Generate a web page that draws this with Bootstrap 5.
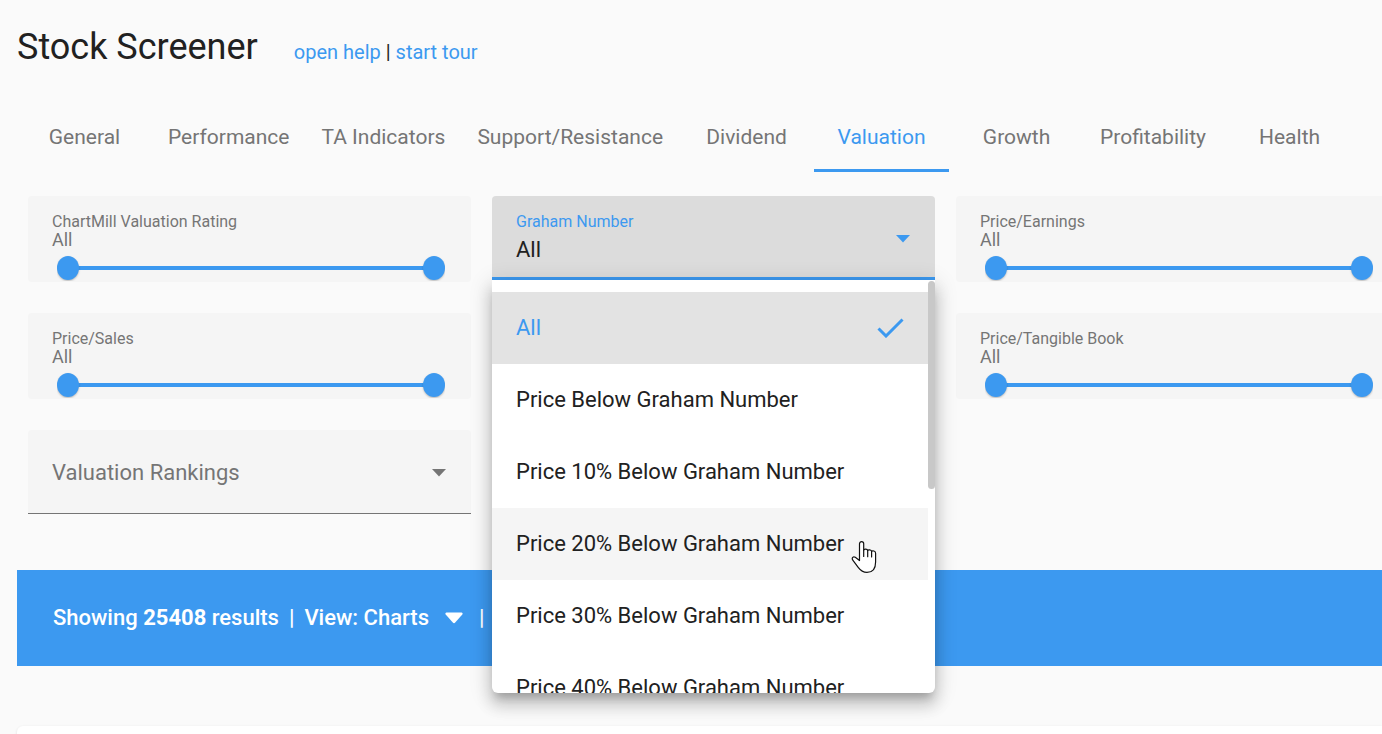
<!DOCTYPE html>
<html lang="en">
<head>
<meta charset="utf-8">
<meta name="viewport" content="width=device-width, initial-scale=1">
<title>Stock Screener</title>
<link rel="stylesheet" href="https://cdn.jsdelivr.net/npm/bootstrap@5.3.0/dist/css/bootstrap.min.css">
<style>
  :root { --accent: #3c99f0; --muted: #757575; --ink: #212121; }
  body { background: #fafafa; color: var(--ink); font-family: Roboto, sans-serif; font-size: 21px; line-height: 24px; }
  .page { overflow: hidden; min-height: 100vh; padding-left: 17px; }
  .page-title { font-size: 36px; line-height: 48px; font-weight: 400; }
  .help-links { font-size: 20px; }
  .help-links a { color: var(--accent); text-decoration: none; }
  .page-head { padding: 23px 0 29px; gap: 36px; }

  .screener-tabs .nav-link { min-width: 135px; height: 72px; padding: 4px 16px 0; color: var(--muted); background: none; border: 0; border-bottom: 3px solid transparent; border-radius: 0; text-align: center; }
  .screener-tabs .nav-link.active { color: var(--accent); border-color: var(--accent); }

  .filters { display: grid; grid-template-columns: repeat(3, 1fr); gap: 31px 21px; margin: 24px -17px 0 11px; }
  .filter-box { background: #f5f5f5; height: 86px; padding: 16px 24px 0; color: var(--muted); border-radius: 4px; }
  .col-last { grid-column: 3; }
  .filter-name { display: block; font-size: 16px; line-height: 20px; }
  .filter-value { display: block; font-size: 18px; line-height: 16px; }

  .dual-range { display: grid; overflow: hidden; height: 33px; margin: 0 2px 0 5px; }
  .dual-range input { grid-area: 1 / 1; appearance: none; width: 100%; height: 24px; margin: 8px 0 0; background: none; pointer-events: none; }
  .dual-range .track { grid-area: 1 / 1; height: 4px; margin: 18px 11px 0; background: var(--accent); }
  .dual-range input::-webkit-slider-thumb { appearance: none; width: 22px; height: 24px; border: 0; border-radius: 50%; background: var(--accent); box-shadow: 0 1px 2px rgba(0,0,0,.25); pointer-events: auto; }

  .select-box { height: 84px; background: #f5f5f5; border-bottom: 1px solid #757575; border-radius: 4px 4px 0 0; color: var(--muted); }
  .select-box select { appearance: none; width: 100%; height: 100%; padding: 2px 24px 0; border: 0; background: none; color: inherit; outline: 0; font-size: 22px; }
  .select-box.open { background: #dcdcdc; border-bottom: 3px solid var(--accent); }
  .select-box.open label { left: 24px; top: 16px; font-size: 16px; line-height: 20px; color: var(--accent); }
  .select-box.open select { padding-top: 27px; color: var(--ink); }
  .arrow { position: absolute; right: 25px; top: 39px; pointer-events: none; fill: currentColor; }
  .open .arrow { color: var(--accent); }

  .option-menu { position: absolute; left: 0; right: 0; top: 84px; height: 413px; padding: 12px 7px 0 0; overflow: hidden; background: #fff; border-radius: 0 0 6px 6px; z-index: 5;
    box-shadow: 0 8px 8px -4px rgba(0,0,0,.2), 0 12px 15px 2px rgba(0,0,0,.14), 0 4px 21px 3px rgba(0,0,0,.12); }
  .option-menu button { display: flex; align-items: center; justify-content: space-between; position: relative; width: 100%; height: 72px; padding: 0 24px; border: 0; background: none; color: var(--ink); text-align: left; font-size: 22px; }
  .option-menu button.chosen { background: #e3e3e3; color: var(--accent); }
  .option-menu button.hovered { background: #f5f5f5; }
  .scroll-thumb { position: absolute; right: 0; top: 1px; width: 7px; height: 208px; border-radius: 4px; background: #c8c8c8; }
  .pointer { position: absolute; right: 51px; top: 32px; }

  .result-bar { background: var(--accent); color: #fff; height: 96px; margin-top: 56px; padding: 0 36px; font-size: 22px; font-weight: 500; }
  .result-bar b { font-weight: 700; }
  .result-bar button { border: 0; background: none; color: inherit; font-weight: 500; padding: 0; gap: 16px; }
  .divider { padding: 0 10px; }
  .result-panel { height: 90px; margin: 60px 0 -82px; background: #fff; border-radius: 6px 0 0 0; box-shadow: 0 1px 3px rgba(0,0,0,.12); }
</style>
</head>
<body>
<div class="page">
  <header class="page-head d-flex align-items-baseline">
    <h1 class="page-title m-0">Stock Screener</h1>
    <div class="help-links"><a href="#help">open help</a> | <a href="#tour">start tour</a></div>
  </header>

  <nav class="nav screener-tabs flex-nowrap text-nowrap" aria-label="Filter groups">
    <button class="nav-link">General</button>
    <button class="nav-link">Performance</button>
    <button class="nav-link">TA Indicators</button>
    <button class="nav-link">Support/Resistance</button>
    <button class="nav-link">Dividend</button>
    <button class="nav-link active" aria-current="true">Valuation</button>
    <button class="nav-link">Growth</button>
    <button class="nav-link">Profitability</button>
    <button class="nav-link">Health</button>
  </nav>

  <main>
    <section class="filters">
      <div class="filter-box">
        <label class="filter-name" for="rating-min">ChartMill Valuation Rating</label>
        <output class="filter-value">All</output>
        <div class="dual-range">
          <span class="track"></span>
          <input type="range" id="rating-min" value="0">
          <input type="range" aria-label="ChartMill Valuation Rating maximum" value="100">
        </div>
      </div>

      <div class="select-box open position-relative">
        <label class="position-absolute" for="graham">Graham Number</label>
        <select id="graham"><option>All</option></select>
        <svg class="arrow" width="14" height="8" viewBox="0 0 14 8"><path d="M0 0h14L7 7.500z"/></svg>
        <div class="option-menu" role="listbox" aria-label="Graham Number">
          <button class="chosen" role="option" aria-selected="true">All
            <svg width="27" height="20" viewBox="0 0 27 20" fill="none" stroke="currentColor" stroke-width="3"><path d="M1.500 10.500 9 18 25.500 1.500"/></svg>
          </button>
          <button role="option">Price Below Graham Number</button>
          <button role="option">Price 10% Below Graham Number</button>
          <button class="hovered" role="option">Price 20% Below Graham Number
            <svg class="pointer" width="26" height="34" viewBox="0 0 26 34" fill="#fff" stroke="#111" stroke-width="1.200" stroke-linejoin="round" stroke-linecap="round"><path d="M8.500 20.500V3.800c0-3 4.200-3 4.200 0v6.400c.4-1.600 3.700-1.600 4 .4.500-1.300 3.600-1 3.900.8.800-1.100 4-.5 4 1.800V22c0 7-3 10.400-8.600 10.400-4 0-6.600-2-8.800-5l-5.400-7.200c-1.500-2.400.5-4 2.500-2.900z"/><path d="M12.700 10v6.500M16.700 10.500v6.200M20.600 11.500v5.500" fill="none"/></svg>
          </button>
          <button role="option">Price 30% Below Graham Number</button>
          <button role="option">Price 40% Below Graham Number</button>
          <span class="scroll-thumb"></span>
        </div>
      </div>

      <div class="filter-box">
        <label class="filter-name" for="pe-min">Price/Earnings</label>
        <output class="filter-value">All</output>
        <div class="dual-range">
          <span class="track"></span>
          <input type="range" id="pe-min" value="0">
          <input type="range" aria-label="Price/Earnings maximum" value="100">
        </div>
      </div>

      <div class="filter-box">
        <label class="filter-name" for="ps-min">Price/Sales</label>
        <output class="filter-value">All</output>
        <div class="dual-range">
          <span class="track"></span>
          <input type="range" id="ps-min" value="0">
          <input type="range" aria-label="Price/Sales maximum" value="100">
        </div>
      </div>

      <div class="filter-box col-last">
        <label class="filter-name" for="ptb-min">Price/Tangible Book</label>
        <output class="filter-value">All</output>
        <div class="dual-range">
          <span class="track"></span>
          <input type="range" id="ptb-min" value="0">
          <input type="range" aria-label="Price/Tangible Book maximum" value="100">
        </div>
      </div>

      <div class="select-box position-relative">
        <select aria-label="Valuation Rankings"><option>Valuation Rankings</option></select>
        <svg class="arrow" width="14" height="8" viewBox="0 0 14 8"><path d="M0 0h14L7 7.500z"/></svg>
      </div>
    </section>

    <section class="result-bar d-flex align-items-center text-nowrap">
      <span>Showing <b>25408</b> results</span>
      <span class="divider">|</span>
      <button class="d-flex align-items-center">View: Charts
        <svg width="18" height="12" viewBox="0 0 18 12" fill="#fff"><path d="M1.500.5h15c1 0 1.500 1.200.8 2L10.200 10.600c-.7.700-1.700.7-2.400 0L.7 2.500C0 1.700.5.5 1.500.5z"/></svg>
      </button>
      <span class="px-3">|</span>
    </section>
    <section class="result-panel"></section>
  </main>
</div>
<script src="https://cdn.jsdelivr.net/npm/bootstrap@5.3.0/dist/js/bootstrap.bundle.min.js"></script>
</body>
</html>
